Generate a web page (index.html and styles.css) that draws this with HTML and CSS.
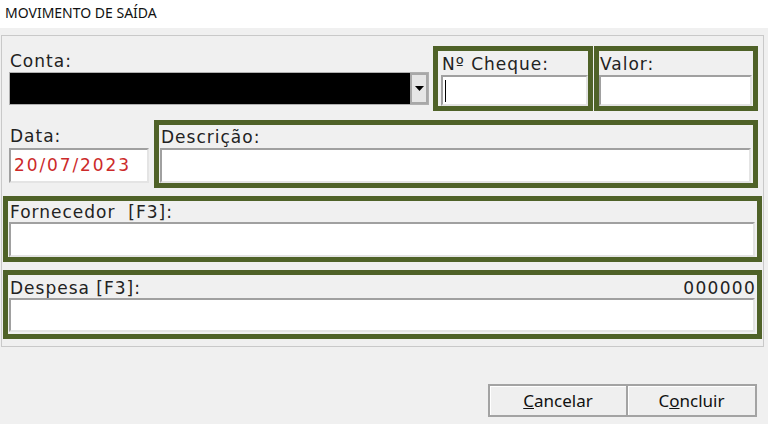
FILE: index.html
```html
<!DOCTYPE html>
<html>
<head>
<meta charset="utf-8">
<link rel="stylesheet" href="styles.css">
</head>
<body>
<div class="titlebar">MOVIMENTO DE SAÍDA</div>
<div class="page">
  <div class="panel">
    <div class="row row1">
      <div class="col conta">
        <div class="lbl">Conta:</div>
        <div class="combo">
          <div class="combo-value"></div>
          <div class="combo-btn"><svg width="9" height="5" viewBox="0 0 9 5"><path d="M0 0H9L4.5 5Z" fill="#000"/></svg></div>
        </div>
      </div>
      <div class="gbox cheque">
        <div class="lbl">Nº Cheque:</div>
        <div class="input"><span class="caret"></span></div>
      </div>
      <div class="gbox valor">
        <div class="lbl">Valor:</div>
        <div class="input"></div>
      </div>
    </div>
    <div class="row row2">
      <div class="col data">
        <div class="lbl">Data:</div>
        <div class="input date">20/07/2023</div>
      </div>
      <div class="gbox desc">
        <div class="lbl">Descrição:</div>
        <div class="input"></div>
      </div>
    </div>
    <div class="gbox wide forn">
      <div class="lbl">Fornecedor&nbsp; [F3]:</div>
      <div class="input"></div>
    </div>
    <div class="gbox wide desp">
      <div class="lbl split"><span>Despesa [F3]:</span><span>000000</span></div>
      <div class="input"></div>
    </div>
  </div>
  <div class="actions">
    <div class="btn"><u>C</u>ancelar</div>
    <div class="btn">C<u>o</u>ncluir</div>
  </div>
</div>
</body>
</html>
```
FILE: styles.css
```css
* { box-sizing: border-box; }
html, body { margin: 0; padding: 0; }
body {
  width: 768px;
  height: 424px;
  background: #f0f0f0;
  overflow: hidden;
  font-family: "DejaVu Sans", Verdana, sans-serif;
  color: #222;
}
.titlebar {
  height: 28px;
  background: #ffffff;
  font-family: "Noto Sans", "Open Sans", sans-serif;
  font-size: 14px;
  line-height: 19px;
  color: #111;
  padding: 3px 0 0 5px;
}
.page {
  padding: 7px 5px 0 1px;
}
.panel {
  border: 1px solid #c9c9c9;
  padding: 10px 0 7px 1px;
  display: flex;
  flex-direction: column;
  gap: 8px;
  width: 763px;
}
.row { display: flex; }
.row1 { height: 65px; margin-bottom: 1px; }
.row2 { height: 68px; }
.lbl {
  font-size: 17px;
  letter-spacing: 1px;
  line-height: 20px;
  height: 24px;
  padding-top: 3px;
  padding-left: 1px;
  white-space: nowrap;
}
.col { display: flex; flex-direction: column; }
.conta { width: 420px; margin-left: 6px; padding-top: 5px; }
.conta .lbl { height: 21px; padding-top: 0; }
.combo {
  display: flex;
  height: 33px;
  border: 1px solid #b0b0b0;
  background: #000;
}
.combo-value { flex: 1; background: #000; }
.combo-btn {
  width: 18px;
  background: #e6e6e6;
  border: 2px solid #a8a8a8;
  display: flex;
  align-items: center;
  justify-content: center;
}
.gbox {
  border: 5px solid #4f6228;
  display: flex;
  flex-direction: column;
  padding: 0 3px 0 3px;
}
.cheque { width: 160px; margin-left: 4px; padding-right: 0; }
.valor { width: 164px; margin-left: 1px; padding-right: 1px; padding-left: 0; }
.input {
  background: #ffffff;
  border-top: 2px solid #a0a0a0;
  border-left: 2px solid #a0a0a0;
  border-bottom: 2px solid #e4e4e4;
  border-right: 2px solid #e4e4e4;
  height: 31px;
  position: relative;
}
.caret {
  position: absolute;
  left: 2px;
  top: 3px;
  width: 1px;
  height: 22px;
  background: #000;
}
.data { width: 140px; margin-left: 6px; padding-top: 3px; }
.data .lbl { height: 25px; }
.input.date {
  height: 35px;
  color: #cc2a2a;
  font-size: 17px;
  letter-spacing: 1.9px;
  line-height: 30px;
  padding-left: 3px;
}
.desc { flex: none; width: 604px; margin-left: 5px; padding: 0 2px 0 1px; }
.desc .lbl { height: 23px; padding-top: 2px; }
.desc .input { height: 35px; }
.wide { width: 759px; padding: 0 2px 0 1px; }
.forn { height: 66px; }
.forn .lbl { height: 21px; padding-top: 1px; }
.forn .input { height: 36px; }
.desp { height: 69px; padding-bottom: 2px; }
.desp .lbl { height: 23px; }
.desp .lbl span:last-child { letter-spacing: 1.3px; margin-right: -1px; }
.desp .input { height: 34px; }
.split { display: flex; justify-content: space-between; }
.actions {
  display: flex;
  justify-content: flex-end;
  padding: 37px 6px 0 0;
}
.btn {
  height: 33px;
  border: 2px solid #a3a3a3;
  box-shadow: inset 1px 1px 0 #ffffff;
  background: #efefef;
  font-family: "Noto Sans", "Open Sans", sans-serif;
  font-size: 17px;
  color: #111;
  display: flex;
  align-items: center;
  justify-content: center;
}
.btn:first-child { width: 139px; border-right-width: 1px; }
.btn:last-child { width: 130px; border-left-width: 1px; }
```
